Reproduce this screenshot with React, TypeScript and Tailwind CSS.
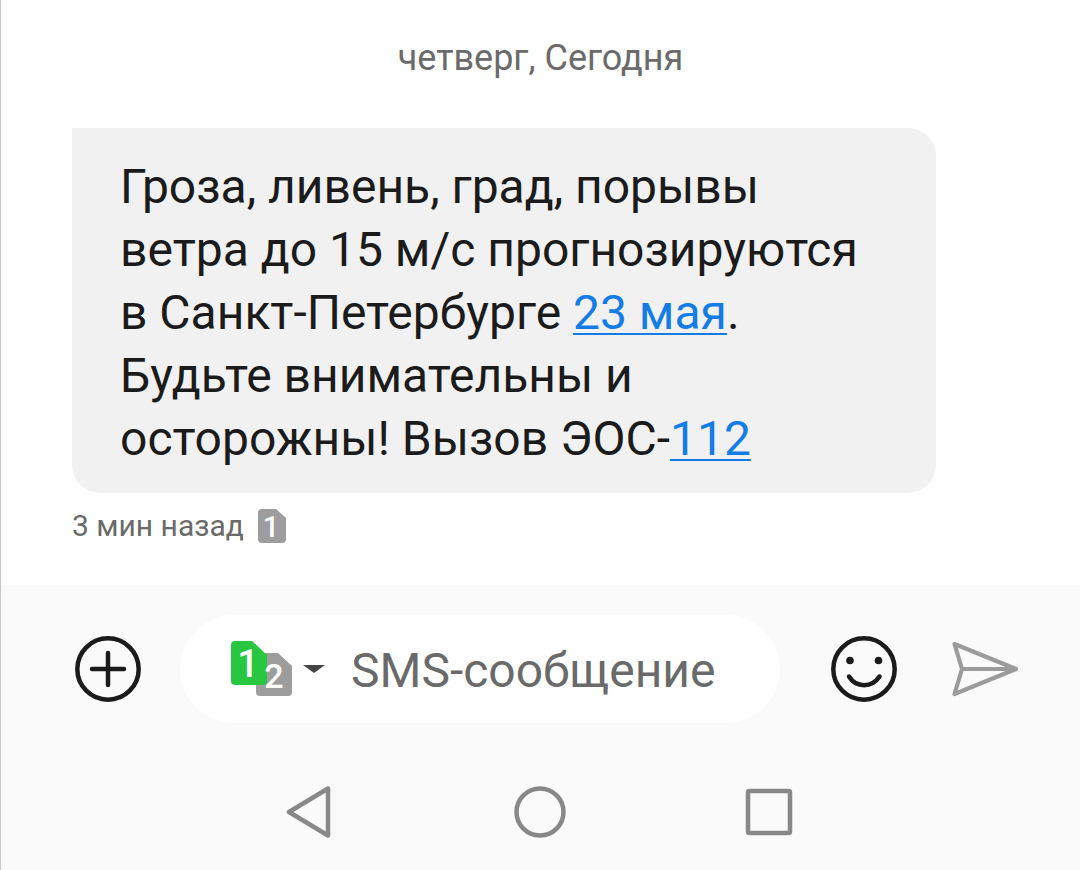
import { useState } from "react";

function SimBadge() {
  return (
    <svg width="28" height="34" viewBox="0 0 28 34" role="img" aria-label="SIM 1">
      <path d="M4 0H18L28 9V30a4 4 0 0 1-4 4H4a4 4 0 0 1-4-4V4a4 4 0 0 1 4-4Z" fill="#9d9d9d" />
      <text x="13" y="28" textAnchor="middle" fontSize="29" fontWeight="500" fill="#fff">1</text>
    </svg>
  );
}

function SimPair() {
  return (
    <svg width="94" height="56" viewBox="0 0 94 56" aria-hidden="true">
      <path d="M29 12H47L61 25V51a4 4 0 0 1-4 4H29a4 4 0 0 1-4-4V16a4 4 0 0 1 4-4Z" fill="#9d9d9d" />
      <path d="M4 0H21L36 14V40a4 4 0 0 1-4 4H4a4 4 0 0 1-4-4V4a4 4 0 0 1 4-4Z" fill="#27c840" />
      <text x="17" y="36" textAnchor="middle" fontSize="38" fontWeight="500" fill="#fff">1</text>
      <text x="43" y="47" textAnchor="middle" fontSize="34" fontWeight="500" fill="#fff">2</text>
      <path d="M72 24H94L83 32Z" fill="#444" />
    </svg>
  );
}

function PlusIcon() {
  return (
    <svg width="66" height="66" viewBox="0 0 66 66" fill="none" stroke="#1b1b1b" strokeWidth="4.5" strokeLinecap="round">
      <circle cx="33" cy="33" r="30.7" />
      <path d="M33 17V49M17 33H49" />
    </svg>
  );
}

function SmileIcon() {
  return (
    <svg width="66" height="66" viewBox="0 0 66 66" fill="none" stroke="#1b1b1b" strokeWidth="4.5" strokeLinecap="round">
      <circle cx="33" cy="33" r="30.7" />
      <circle cx="19" cy="24.5" r="3.8" fill="#1b1b1b" stroke="none" />
      <circle cx="47.5" cy="24.5" r="3.8" fill="#1b1b1b" stroke="none" />
      <path d="M18 40.5C25 52 41 52 48.5 40.5" />
    </svg>
  );
}

function SendIcon() {
  return (
    <svg width="68" height="58" viewBox="0 0 68 58" fill="none" stroke="#9b9b9b" strokeWidth="4.2" strokeLinecap="round" strokeLinejoin="round">
      <path d="M3.5 4L65 29L3.5 54L11 29ZM11 29H65" />
    </svg>
  );
}

export default function App() {
  const [message, setMessage] = useState("");

  return (
    <div className="flex min-h-screen flex-col border-l border-[#c8c8c8] bg-white font-[Roboto,sans-serif] text-[#1b1b1b]">
      <main className="flex grow flex-col px-[71px] pb-10">
        <p className="mt-9 text-center text-[36px] leading-[44px] text-[#6a6a6a]">четверг, Сегодня</p>
        <article className="mt-12 w-4/5 min-w-[864px] self-start rounded-[28px] rounded-tl-none bg-[#f1f1f1] px-12 pt-[27px] pb-[23px] text-[48px] leading-[63px]">
          Гроза, ливень, град, порывы
          <br />
          ветра до 15 м/с прогнозируются
          <br />
          в Санкт-Петербурге{" "}
          <a href="#date" className="text-[#147ce5] underline decoration-2 underline-offset-4">23 мая</a>.
          <br />
          Будьте внимательны и
          <br />
          осторожны! Вызов ЭОС-
          <a href="tel:112" className="text-[#147ce5] underline decoration-2 underline-offset-4">112</a>
        </article>
        <div className="mt-[15px] flex items-center gap-[14px] text-[30px] leading-9 text-[#6a6a6a]">
          <span>3 мин назад</span>
          <SimBadge />
        </div>
      </main>

      <footer className="bg-[#fafafa]">
        <form className="flex items-center pt-[30px] pr-[61px] pl-[74px]" onSubmit={(e) => e.preventDefault()}>
          <button type="button" aria-label="Добавить">
            <PlusIcon />
          </button>
          <div className="mr-[51px] ml-[39px] flex h-[108px] min-w-0 grow items-center gap-[26px] rounded-full bg-white pr-8 pl-[51px]">
            <button type="button" aria-label="Выбор SIM-карты" className="shrink-0">
              <SimPair />
            </button>
            <input
              type="text"
              aria-label="SMS-сообщение"
              placeholder="SMS-сообщение"
              value={message}
              onChange={(e) => setMessage(e.target.value)}
              className="w-full min-w-0 bg-transparent pt-1 text-[48px] leading-[60px] outline-none placeholder:text-[#6a6a6a]"
            />
          </div>
          <button type="button" aria-label="Смайлики">
            <SmileIcon />
          </button>
          <button type="submit" aria-label="Отправить" className="ml-[54px]">
            <SendIcon />
          </button>
        </form>
        <nav className="flex items-center justify-center gap-[178px] pt-[63px] pr-0.5 pb-8" aria-label="Навигация">
          <button type="button" aria-label="Назад">
            <svg width="52" height="52" viewBox="0 0 52 52" fill="none" stroke="#888" strokeWidth="4.5" strokeLinejoin="round">
              <path d="M5 26L44 2.5V49.5Z" />
            </svg>
          </button>
          <button type="button" aria-label="Домой">
            <svg width="52" height="52" viewBox="0 0 52 52" fill="none" stroke="#888" strokeWidth="4.5">
              <circle cx="26" cy="26" r="23.5" />
            </svg>
          </button>
          <button type="button" aria-label="Недавние">
            <svg width="52" height="52" viewBox="0 0 52 52" fill="none" stroke="#888" strokeWidth="4.5">
              <rect x="4" y="5" width="42" height="42" rx="1.5" />
            </svg>
          </button>
        </nav>
      </footer>
    </div>
  );
}
